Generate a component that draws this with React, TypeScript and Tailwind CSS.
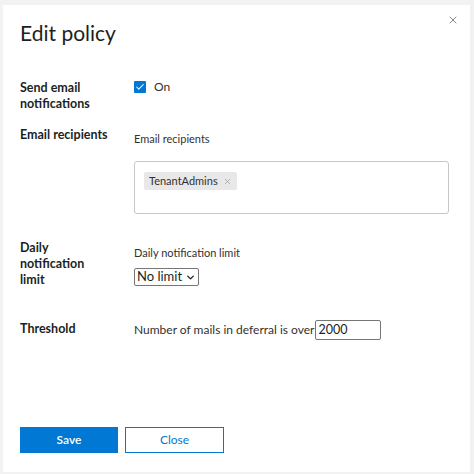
import { X, Check, ChevronDown } from 'lucide-react';

const font = { fontFamily: 'Lato, "Noto Sans", sans-serif' };

function Label({ children }: { children: React.ReactNode }) {
  return <div className="text-[12.5px] leading-[16px] font-bold text-[#201f1e]">{children}</div>;
}

export default function App() {
  return (
    <div className="w-[474px] h-[474px] bg-[#f2f2f2] pt-[5px] pl-[3px] pr-[4px] pb-[2px]" style={font}>
      <div className="relative h-full bg-white pl-[17px] pr-[21px]">
        <button className="absolute right-[11px] top-[9px] text-[#605e5c]">
          <X size={12} strokeWidth={1.5} />
        </button>

        <h1 className="pt-[14px] text-[21px] leading-[28px] text-[#201f1e]">Edit policy</h1>

        <div className="mt-[33px] grid grid-cols-[114px_1fr]">
          <Label>
            Send email
            <br />
            notifications
          </Label>
          <div className="flex items-center gap-[8px] h-[13px]">
            <span className="flex h-[12px] w-[12px] items-center justify-center rounded-[1px] bg-[#0078d4]">
              <Check size={10} strokeWidth={2.5} className="text-white" />
            </span>
            <span className="text-[12px] text-[#323130]">On</span>
          </div>

          <div className="mt-[15px]">
            <Label>Email recipients</Label>
          </div>
          <div className="mt-[15px] pt-[5px]">
            <div className="text-[11px] leading-[14px] text-[#323130]">Email recipients</div>
            <div className="mt-[15px] h-[53px] rounded-[3px] border border-[#c8c6c4] px-[9px] pt-[5px]">
              <span className="inline-flex h-[18px] items-center gap-[5px] rounded-[2px] bg-[#e8e8e8] px-[5px] text-[11px] text-[#323130]">
                TenantAdmins
                <X size={9} className="text-[#a19f9d]" />
              </span>
            </div>
          </div>

          <div className="mt-[26px]">
            <Label>
              Daily
              <br />
              notification
              <br />
              limit
            </Label>
          </div>
          <div className="mt-[26px] pt-[6px]">
            <div className="text-[11px] leading-[14px] text-[#323130]">Daily notification limit</div>
            <div className="mt-[8px] inline-flex h-[18px] items-center gap-[3px] border border-[#767676] rounded-[2px] px-[2px] text-[13px] text-[#201f1e]">
              No limit
              <ChevronDown size={11} strokeWidth={3} />
            </div>
          </div>

          <div className="mt-[33px]">
            <Label>Threshold</Label>
          </div>
          <div className="mt-[33px] -translate-y-[1px] flex items-center">
            <span className="text-[12px] text-[#323130]">Number of mails in deferral is over</span>
            <span className="ml-[1px] flex h-[20px] w-[66px] items-center border border-[#767676] rounded-[2px] px-[2px] text-[12.5px] text-[#201f1e]">
              2000
            </span>
          </div>
        </div>

        <div className="absolute left-[17px] top-[422px] flex gap-[7px]">
          <button className="h-[26px] w-[98px] bg-[#0078d4] text-[12px] font-semibold text-white">Save</button>
          <button className="h-[26px] w-[99px] border border-[#0078d4] bg-white text-[12px] text-[#0078d4]">
            Close
          </button>
        </div>
      </div>
    </div>
  );
}
